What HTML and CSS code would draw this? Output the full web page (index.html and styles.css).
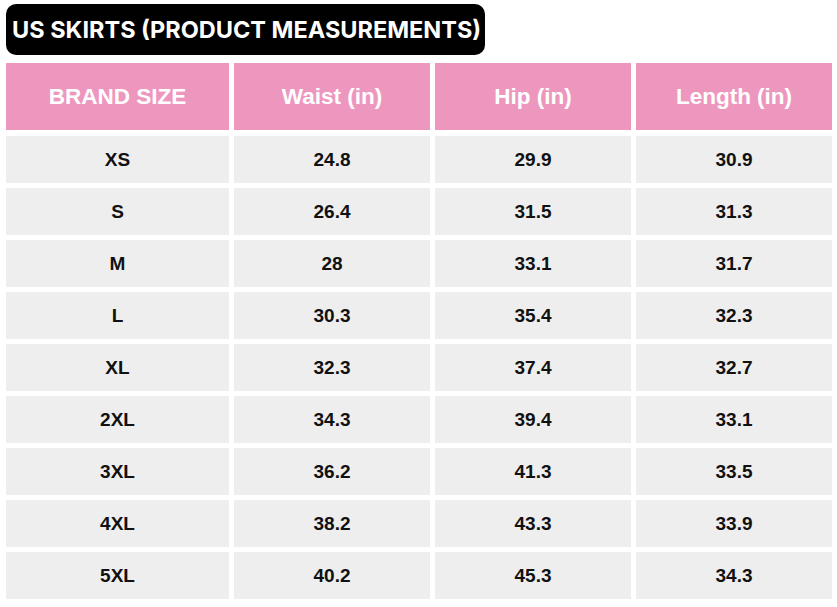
FILE: index.html
```html
<!DOCTYPE html>
<html>
<head>
<meta charset="utf-8">
<link rel="stylesheet" href="styles.css">
</head>
<body>
<div class="page">
  <div class="title">US SKIRTS (PRODUCT MEASUREMENTS)</div>
  <div class="grid">
    <div class="head">BRAND SIZE</div><div class="head">Waist (in)</div><div class="head">Hip (in)</div><div class="head">Length (in)</div>
    <div class="cell">XS</div><div class="cell">24.8</div><div class="cell">29.9</div><div class="cell">30.9</div>
    <div class="cell">S</div><div class="cell">26.4</div><div class="cell">31.5</div><div class="cell">31.3</div>
    <div class="cell">M</div><div class="cell">28</div><div class="cell">33.1</div><div class="cell">31.7</div>
    <div class="cell">L</div><div class="cell">30.3</div><div class="cell">35.4</div><div class="cell">32.3</div>
    <div class="cell">XL</div><div class="cell">32.3</div><div class="cell">37.4</div><div class="cell">32.7</div>
    <div class="cell">2XL</div><div class="cell">34.3</div><div class="cell">39.4</div><div class="cell">33.1</div>
    <div class="cell">3XL</div><div class="cell">36.2</div><div class="cell">41.3</div><div class="cell">33.5</div>
    <div class="cell">4XL</div><div class="cell">38.2</div><div class="cell">43.3</div><div class="cell">33.9</div>
    <div class="cell">5XL</div><div class="cell">40.2</div><div class="cell">45.3</div><div class="cell">34.3</div>
  </div>
</div>
</body>
</html>
```
FILE: styles.css
```css
html, body {
  margin: 0;
  padding: 0;
  background: #ffffff;
}
.page {
  padding: 4px 5px 0 6px;
  display: flex;
  flex-direction: column;
  align-items: flex-start;
  gap: 8px;
}
.title {
  background: #000000;
  color: #ffffff;
  font-family: Inter, "Liberation Sans", sans-serif;
  font-weight: 700;
  font-size: 23.5px;
  height: 51px;
  line-height: 51px;
  padding: 0 6px;
  border-radius: 10px;
  box-sizing: border-box;
  width: 479px;
  white-space: nowrap;
}
.grid {
  display: grid;
  grid-template-columns: 223px 196px 196px 196px;
  grid-template-rows: 68px repeat(9, 47px);
  column-gap: 5px;
  row-gap: 5px;
}
.head {
  background: #ee97be;
  color: #ffffff;
  font-family: "Liberation Sans", Arial, sans-serif;
  font-weight: 700;
  font-size: 22.5px;
  display: flex;
  align-items: center;
  justify-content: center;
  margin-bottom: 1px;
}
.cell {
  background: #eeeeee;
  color: #111111;
  font-family: "Liberation Sans", Arial, sans-serif;
  font-weight: 700;
  font-size: 19px;
  display: flex;
  align-items: center;
  justify-content: center;
}
```
